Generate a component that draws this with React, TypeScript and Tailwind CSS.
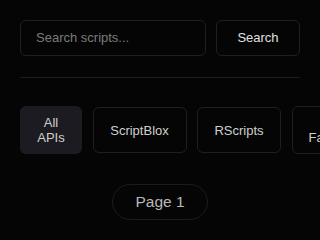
import React from "react";

export default function App() {
  return (
    <div
      className="w-[320px] h-[240px] overflow-hidden bg-[#050505] px-5 pt-5"
      style={{ fontFamily: '"Liberation Sans", Arial, sans-serif' }}
    >
      <div className="flex gap-2.5 h-9">
        <div className="flex-1 flex items-center rounded-md border border-[#1f1f1f] px-[15px] text-[13px] text-[#7c7c7c]">
          Search scripts...
        </div>
        <div className="w-[84px] flex items-center justify-center rounded-md border border-[#1f1f1f] text-[13px] text-[#e0e0e0]">
          Search
        </div>
      </div>
      <div className="mt-[21px] h-px bg-[#1c1c1c]" />
      <div className="mt-7 flex items-center gap-[10.5px]">
        <div className="shrink-0 h-12 w-[62px] flex items-center justify-center rounded-md border border-transparent bg-[#1b1b21] text-center text-[13px] leading-[15px] text-[#cfcfcf]">
          All
          <br />
          APIs
        </div>
        <div className="shrink-0 h-[46px] w-[94px] flex items-center justify-center rounded-md border border-[#1f1f1f] text-[13px] leading-[15px] text-[#cfcfcf]">
          ScriptBlox
        </div>
        <div className="shrink-0 h-[46px] w-[84px] flex items-center justify-center rounded-md border border-[#1f1f1f] text-[13px] leading-[15px] text-[#cfcfcf]">
          RScripts
        </div>
        <div className="shrink-0 h-12 flex items-center justify-center rounded-md border border-[#1f1f1f] px-4 text-center text-[13px] leading-[15px] text-[#cfcfcf]">
          Fan
          <br />
          Favorites
        </div>
      </div>
      <div className="mt-[30px] flex justify-center">
        <div className="h-9 flex items-center rounded-full border border-[#1c1c1c] px-[22px] text-[15.5px] text-[#b8b8b8]">
          Page 1
        </div>
      </div>
    </div>
  );
}
